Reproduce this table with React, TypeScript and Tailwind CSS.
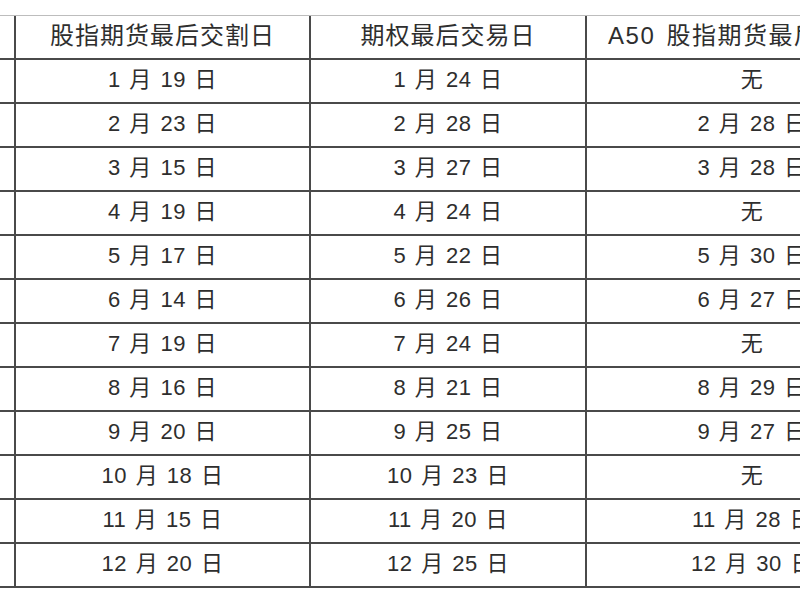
import React from "react";

const rows: [string, string, string][] = [
  ["1 月 19 日", "1 月 24 日", "无"],
  ["2 月 23 日", "2 月 28 日", "2 月 28 日"],
  ["3 月 15 日", "3 月 27 日", "3 月 28 日"],
  ["4 月 19 日", "4 月 24 日", "无"],
  ["5 月 17 日", "5 月 22 日", "5 月 30 日"],
  ["6 月 14 日", "6 月 26 日", "6 月 27 日"],
  ["7 月 19 日", "7 月 24 日", "无"],
  ["8 月 16 日", "8 月 21 日", "8 月 29 日"],
  ["9 月 20 日", "9 月 25 日", "9 月 27 日"],
  ["10 月 18 日", "10 月 23 日", "无"],
  ["11 月 15 日", "11 月 20 日", "11 月 28 日"],
  ["12 月 20 日", "12 月 25 日", "12 月 30 日"],
];

const font = {
  fontFamily: '"Liberation Sans", "Noto Sans CJK SC", sans-serif',
};

export default function App() {
  return (
    <div
      className="w-[800px] h-[600px] overflow-hidden bg-white text-[#2e2e2e]"
      style={font}
    >
      <div className="pt-[15px] w-[960px]">
        <div className="border-t border-[#bdbdbd]">
          <div className="flex h-[44px] border-b-2 border-[#4a4a4a]">
            <div className="w-[16px] shrink-0 border-r-2 border-[#4a4a4a]" />
            <div className="w-[295px] shrink-0 border-r-2 border-[#4a4a4a] flex items-center justify-center text-[24px] tracking-[1px] pb-[2px]">
              股指期货最后交割日
            </div>
            <div className="w-[276px] shrink-0 border-r-2 border-[#4a4a4a] flex items-center justify-center text-[24px] tracking-[1px] pb-[2px]">
              期权最后交易日
            </div>
            <div className="w-[330px] shrink-0 flex items-center justify-center text-[24px] tracking-[1.5px] [word-spacing:3px] whitespace-nowrap pb-[2px]">
              A50 股指期货最后交易日
            </div>
          </div>
          {rows.map((r, i) => (
            <div
              key={i}
              className="flex h-[44px] border-b-2 border-[#4a4a4a]"
            >
              <div className="w-[16px] shrink-0 border-r-2 border-[#4a4a4a]" />
              <div className="w-[295px] shrink-0 border-r-2 border-[#4a4a4a] flex items-center justify-center text-[22px] tracking-[0.5px] [word-spacing:2px] whitespace-pre pb-[4px]">
                {r[0]}
              </div>
              <div className="w-[276px] shrink-0 border-r-2 border-[#4a4a4a] flex items-center justify-center text-[22px] tracking-[0.5px] [word-spacing:2px] whitespace-pre pb-[4px]">
                {r[1]}
              </div>
              <div className="w-[330px] shrink-0 flex items-center justify-center text-[22px] tracking-[0.5px] [word-spacing:2px] whitespace-pre pb-[4px]">
                {r[2]}
              </div>
            </div>
          ))}
        </div>
      </div>
    </div>
  );
}
